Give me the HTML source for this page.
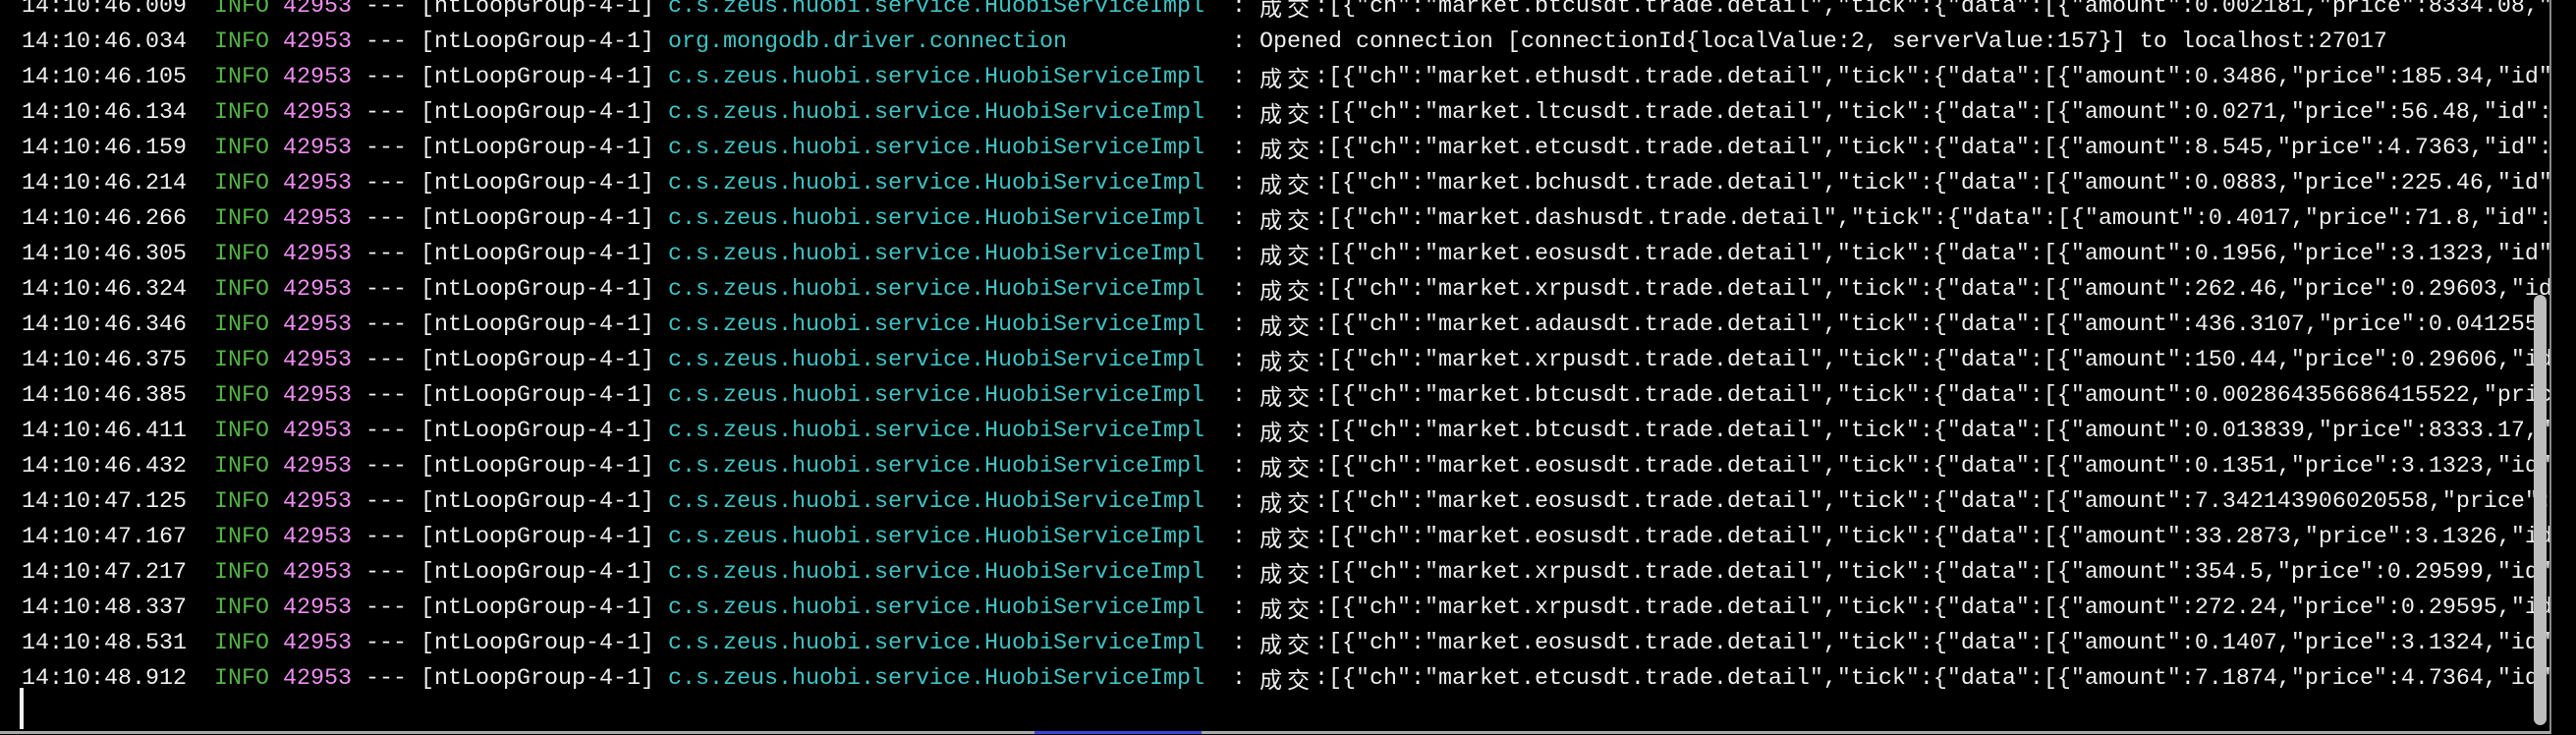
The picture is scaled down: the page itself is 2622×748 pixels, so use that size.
<!DOCTYPE html>
<html><head><meta charset="utf-8"><style>
html,body{margin:0;padding:0;background:#000;}
body{width:2622px;height:748px;overflow:hidden;position:relative;}
#term{position:absolute;left:22px;top:-11px;width:2574px;height:755px;overflow:hidden;
font-family:"Liberation Mono","Noto Sans CJK SC",monospace;font-size:23.33px;line-height:36px;color:#efefef;white-space:pre;}
#term div{height:36px;overflow:hidden;}
.g{color:#55b347}.m{color:#ef8ef0}.c{color:#3fc3c3}
.z{display:inline-block;width:28px;height:36px;line-height:34px;vertical-align:top;font-family:"Noto Sans CJK SC",sans-serif;font-size:23px;text-align:left;}
#cursor{position:absolute;left:20px;top:700px;width:4px;height:42px;background:#f0f0f0;}
#bline{position:absolute;left:0;top:744px;width:2596px;height:3px;background:#a8a8a8;}
#blue{position:absolute;left:1053px;top:744px;width:170px;height:3px;background:#3d44e0;}
#vline{position:absolute;left:2595px;top:0;width:2px;height:747px;background:#8a8a8a;}
#thumb{position:absolute;left:2579px;top:300px;width:13px;height:438px;background:#bdbdbd;border-radius:7px;}
</style></head><body>
<div id="term"><div>14:10:46.009  <span class="g">INFO</span> <span class="m">42953</span> --- [ntLoopGroup-4-1] <span class="c">c.s.zeus.huobi.service.HuobiServiceImpl </span> : <span class="z">成</span><span class="z">交</span>:[{"ch":"market.btcusdt.trade.detail","tick":{"data":[{"amount":0.002181,"price":8334.08,"id":1000000</div><div>14:10:46.034  <span class="g">INFO</span> <span class="m">42953</span> --- [ntLoopGroup-4-1] <span class="c">org.mongodb.driver.connection           </span> : Opened connection [connectionId{localValue:2, serverValue:157}] to localhost:27017</div><div>14:10:46.105  <span class="g">INFO</span> <span class="m">42953</span> --- [ntLoopGroup-4-1] <span class="c">c.s.zeus.huobi.service.HuobiServiceImpl </span> : <span class="z">成</span><span class="z">交</span>:[{"ch":"market.ethusdt.trade.detail","tick":{"data":[{"amount":0.3486,"price":185.34,"id":1000000</div><div>14:10:46.134  <span class="g">INFO</span> <span class="m">42953</span> --- [ntLoopGroup-4-1] <span class="c">c.s.zeus.huobi.service.HuobiServiceImpl </span> : <span class="z">成</span><span class="z">交</span>:[{"ch":"market.ltcusdt.trade.detail","tick":{"data":[{"amount":0.0271,"price":56.48,"id":1000000</div><div>14:10:46.159  <span class="g">INFO</span> <span class="m">42953</span> --- [ntLoopGroup-4-1] <span class="c">c.s.zeus.huobi.service.HuobiServiceImpl </span> : <span class="z">成</span><span class="z">交</span>:[{"ch":"market.etcusdt.trade.detail","tick":{"data":[{"amount":8.545,"price":4.7363,"id":1000000</div><div>14:10:46.214  <span class="g">INFO</span> <span class="m">42953</span> --- [ntLoopGroup-4-1] <span class="c">c.s.zeus.huobi.service.HuobiServiceImpl </span> : <span class="z">成</span><span class="z">交</span>:[{"ch":"market.bchusdt.trade.detail","tick":{"data":[{"amount":0.0883,"price":225.46,"id":1000000</div><div>14:10:46.266  <span class="g">INFO</span> <span class="m">42953</span> --- [ntLoopGroup-4-1] <span class="c">c.s.zeus.huobi.service.HuobiServiceImpl </span> : <span class="z">成</span><span class="z">交</span>:[{"ch":"market.dashusdt.trade.detail","tick":{"data":[{"amount":0.4017,"price":71.8,"id":1000000</div><div>14:10:46.305  <span class="g">INFO</span> <span class="m">42953</span> --- [ntLoopGroup-4-1] <span class="c">c.s.zeus.huobi.service.HuobiServiceImpl </span> : <span class="z">成</span><span class="z">交</span>:[{"ch":"market.eosusdt.trade.detail","tick":{"data":[{"amount":0.1956,"price":3.1323,"id":1000000</div><div>14:10:46.324  <span class="g">INFO</span> <span class="m">42953</span> --- [ntLoopGroup-4-1] <span class="c">c.s.zeus.huobi.service.HuobiServiceImpl </span> : <span class="z">成</span><span class="z">交</span>:[{"ch":"market.xrpusdt.trade.detail","tick":{"data":[{"amount":262.46,"price":0.29603,"id":1000000</div><div>14:10:46.346  <span class="g">INFO</span> <span class="m">42953</span> --- [ntLoopGroup-4-1] <span class="c">c.s.zeus.huobi.service.HuobiServiceImpl </span> : <span class="z">成</span><span class="z">交</span>:[{"ch":"market.adausdt.trade.detail","tick":{"data":[{"amount":436.3107,"price":0.041255,"id":1000000</div><div>14:10:46.375  <span class="g">INFO</span> <span class="m">42953</span> --- [ntLoopGroup-4-1] <span class="c">c.s.zeus.huobi.service.HuobiServiceImpl </span> : <span class="z">成</span><span class="z">交</span>:[{"ch":"market.xrpusdt.trade.detail","tick":{"data":[{"amount":150.44,"price":0.29606,"id":1000000</div><div>14:10:46.385  <span class="g">INFO</span> <span class="m">42953</span> --- [ntLoopGroup-4-1] <span class="c">c.s.zeus.huobi.service.HuobiServiceImpl </span> : <span class="z">成</span><span class="z">交</span>:[{"ch":"market.btcusdt.trade.detail","tick":{"data":[{"amount":0.002864356686415522,"price":8333.17,"id":1000000</div><div>14:10:46.411  <span class="g">INFO</span> <span class="m">42953</span> --- [ntLoopGroup-4-1] <span class="c">c.s.zeus.huobi.service.HuobiServiceImpl </span> : <span class="z">成</span><span class="z">交</span>:[{"ch":"market.btcusdt.trade.detail","tick":{"data":[{"amount":0.013839,"price":8333.17,"id":1000000</div><div>14:10:46.432  <span class="g">INFO</span> <span class="m">42953</span> --- [ntLoopGroup-4-1] <span class="c">c.s.zeus.huobi.service.HuobiServiceImpl </span> : <span class="z">成</span><span class="z">交</span>:[{"ch":"market.eosusdt.trade.detail","tick":{"data":[{"amount":0.1351,"price":3.1323,"id":1000000</div><div>14:10:47.125  <span class="g">INFO</span> <span class="m">42953</span> --- [ntLoopGroup-4-1] <span class="c">c.s.zeus.huobi.service.HuobiServiceImpl </span> : <span class="z">成</span><span class="z">交</span>:[{"ch":"market.eosusdt.trade.detail","tick":{"data":[{"amount":7.342143906020558,"price":3.1326,"id":1000000</div><div>14:10:47.167  <span class="g">INFO</span> <span class="m">42953</span> --- [ntLoopGroup-4-1] <span class="c">c.s.zeus.huobi.service.HuobiServiceImpl </span> : <span class="z">成</span><span class="z">交</span>:[{"ch":"market.eosusdt.trade.detail","tick":{"data":[{"amount":33.2873,"price":3.1326,"id":1000000</div><div>14:10:47.217  <span class="g">INFO</span> <span class="m">42953</span> --- [ntLoopGroup-4-1] <span class="c">c.s.zeus.huobi.service.HuobiServiceImpl </span> : <span class="z">成</span><span class="z">交</span>:[{"ch":"market.xrpusdt.trade.detail","tick":{"data":[{"amount":354.5,"price":0.29599,"id":1000000</div><div>14:10:48.337  <span class="g">INFO</span> <span class="m">42953</span> --- [ntLoopGroup-4-1] <span class="c">c.s.zeus.huobi.service.HuobiServiceImpl </span> : <span class="z">成</span><span class="z">交</span>:[{"ch":"market.xrpusdt.trade.detail","tick":{"data":[{"amount":272.24,"price":0.29595,"id":1000000</div><div>14:10:48.531  <span class="g">INFO</span> <span class="m">42953</span> --- [ntLoopGroup-4-1] <span class="c">c.s.zeus.huobi.service.HuobiServiceImpl </span> : <span class="z">成</span><span class="z">交</span>:[{"ch":"market.eosusdt.trade.detail","tick":{"data":[{"amount":0.1407,"price":3.1324,"id":1000000</div><div>14:10:48.912  <span class="g">INFO</span> <span class="m">42953</span> --- [ntLoopGroup-4-1] <span class="c">c.s.zeus.huobi.service.HuobiServiceImpl </span> : <span class="z">成</span><span class="z">交</span>:[{"ch":"market.etcusdt.trade.detail","tick":{"data":[{"amount":7.1874,"price":4.7364,"id":1000000</div></div>
<div id="cursor"></div>
<div id="thumb"></div>
<div id="vline"></div>
<div id="bline"></div>
<div id="blue"></div>
</body></html>
